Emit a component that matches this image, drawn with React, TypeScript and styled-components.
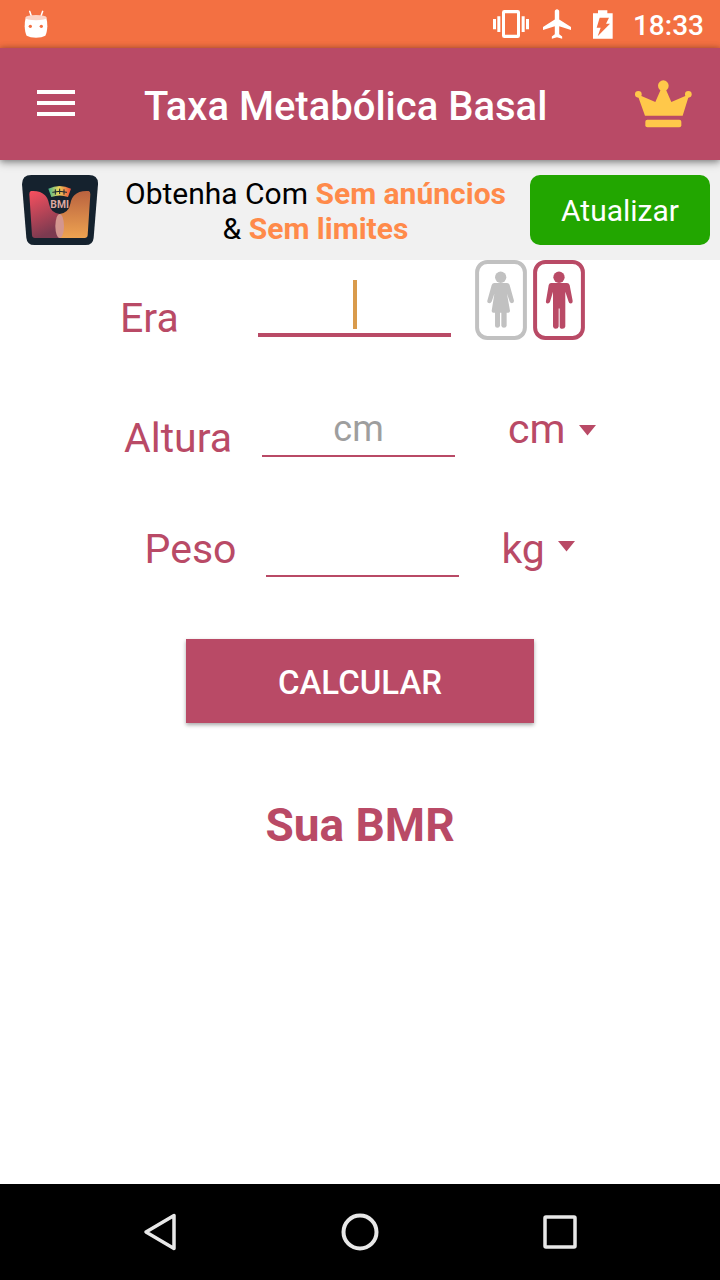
import React, { useState } from "react";
import styled, { createGlobalStyle } from "styled-components";

const rose = "#b94a66";
const orange = "#f37042";

const GlobalStyle = createGlobalStyle`
  *, *::before, *::after { box-sizing: border-box; }
  body {
    margin: 0;
    background: #fff;
    font-family: Roboto, "Noto Sans", sans-serif;
  }
  button, input, select { font-family: inherit; }
`;

const Screen = styled.div`
  display: flex;
  flex-direction: column;
  min-height: 100vh;
`;

const StatusBar = styled.div`
  display: flex;
  align-items: center;
  justify-content: space-between;
  height: 48px;
  padding: 0 16px 0 24px;
  background: ${orange};
`;

const StatusIcons = styled.div`
  display: flex;
  align-items: center;
  gap: 14px;
`;

const BatterySlot = styled.span`
  display: flex;
  padding: 0 6px 0 8px;
`;

const Clock = styled.time`
  color: #fff;
  font-size: 28px;
  font-weight: 500;
  line-height: 32px;
  padding-top: 3px;
`;

const AppBar = styled.header`
  position: relative;
  z-index: 1;
  display: flex;
  align-items: center;
  height: 112px;
  padding: 0 28px 0 36px;
  background: ${rose};
  box-shadow: 0 3px 8px rgba(0, 0, 0, 0.35), 0 0 6px rgba(0, 0, 0, 0.25);
`;

const IconButton = styled.button`
  display: flex;
  padding: 0;
  border: 0;
  background: none;
  cursor: pointer;
`;

const Title = styled.h1`
  flex: 1;
  margin: 0;
  padding: 5px 0 0 68px;
  color: #fff;
  font-size: 40px;
  font-weight: 500;
  line-height: 47px;
`;

const Banner = styled.section`
  display: flex;
  align-items: center;
  height: 100px;
  padding: 0 10px 0 22px;
  background: #f1f1f1;
`;

const Offer = styled.p`
  flex: 1;
  margin: 0;
  padding: 2px 0 0 3px;
  color: #000;
  font-size: 30px;
  line-height: 35px;
  text-align: center;

  strong { color: #ff8a4a; font-weight: 700; }
`;

const UpgradeButton = styled.button`
  width: 180px;
  height: 70px;
  padding: 0;
  border: 0;
  border-radius: 10px;
  background: #22a600;
  color: #fff;
  font-size: 30px;
  cursor: pointer;
`;

const Form = styled.form`
  flex: 1;
  display: flex;
  flex-direction: column;
  align-items: center;
  gap: 40px;
`;

const Row = styled.div`
  display: flex;
  justify-content: center;
  align-items: flex-end;
  gap: 24px;
  height: 80px;
`;

const Label = styled.label<{ $wide?: boolean; $raised?: boolean }>`
  min-width: ${(p) => (p.$wide ? "108px" : "0")};
  margin-right: 6px;
  padding-bottom: ${(p) => (p.$raised ? "9px" : "0")};
  color: ${rose};
  font-size: 41px;
  line-height: 44px;
`;

const Field = styled.div`
  position: relative;
  width: 193px;
  padding-bottom: 3px;
`;

const TextInput = styled.input<{ $active?: boolean }>`
  display: block;
  width: 100%;
  height: 58px;
  padding: 4px 0 0;
  border: 0;
  border-bottom: ${(p) => (p.$active ? "4px" : "2px")} solid ${rose};
  border-radius: 0;
  outline: none;
  background: transparent;
  caret-color: #d99b4c;
  color: ${rose};
  font-size: 36px;
  text-align: center;

  &::placeholder { color: #9e9e9e; opacity: 1; }
`;

const Caret = styled.span`
  position: absolute;
  left: 50%;
  bottom: 11px;
  width: 4px;
  height: 49px;
  margin-left: -2px;
  background: #d99b4c;
  pointer-events: none;
`;

const GenderGroup = styled.div`
  display: flex;
  gap: 6px;
  margin-right: 15px;
`;

const GenderOption = styled.label<{ $on: boolean }>`
  position: relative;
  display: flex;
  color: ${(p) => (p.$on ? rose : "#c1c1c1")};
  cursor: pointer;

  input {
    position: absolute;
    inset: 0;
    width: 100%;
    height: 100%;
    margin: 0;
    opacity: 0;
  }
`;

const UnitBox = styled.div<{ $indent: number; $arrowTop: number }>`
  position: relative;
  display: flex;
  margin: 0 0 7px ${(p) => p.$indent}px;

  svg {
    position: absolute;
    right: 0;
    top: ${(p) => p.$arrowTop}px;
    pointer-events: none;
  }
`;

const UnitSelect = styled.select<{ $width: number }>`
  appearance: none;
  width: ${(p) => p.$width}px;
  height: 48px;
  padding: 0;
  border: 0;
  background: transparent;
  color: ${rose};
  font-size: 41px;
  line-height: 48px;
`;

const Calculate = styled.button`
  width: 348px;
  height: 84px;
  margin-top: 19px;
  padding: 2px 0 0;
  border: 0;
  background: ${rose};
  box-shadow: 0 2px 4px rgba(0, 0, 0, 0.35);
  color: #fff;
  font-size: 33px;
  font-weight: 500;
  cursor: pointer;
`;

const Result = styled.h2`
  margin: 34px 0 40px;
  color: ${rose};
  font-size: 46px;
  font-weight: 700;
  line-height: 56px;
`;

const NavBar = styled.nav`
  display: flex;
  height: 96px;
  padding: 0 60px;
  background: #000;
`;

const NavButton = styled.button`
  flex: 1;
  display: flex;
  align-items: center;
  justify-content: center;
  padding: 0;
  border: 0;
  background: none;
`;

const RobotIcon = () => (
  <svg width="24" height="28" viewBox="72 23 72 84" fill="#fff" aria-hidden="true">
    <path d="M89 27 L94 41 M128 27 L123 41" stroke="#fff" strokeWidth="4.5" strokeLinecap="round" />
    <path d="M77 46 Q74 58 74 72 Q75 92 80 100 Q90 106 108 106 Q126 106 136 100 Q141 92 142 72 Q142 58 139 46 Z" />
    <ellipse cx="108" cy="46" rx="32" ry="8" fill="#fbd3c5" />
    <circle cx="91" cy="72" r="5" fill={orange} />
    <circle cx="124" cy="72" r="5" fill={orange} />
  </svg>
);

const VibrateIcon = () => (
  <svg width="36" height="28" viewBox="39 29 108 84" fill="#fff" aria-hidden="true">
    <path fillRule="evenodd" d="M73 29h40q7 0 7 7v70q0 7-7 7H73q-7 0-7-7V36q0-7 7-7z M75 39v64h36V39z" />
    <path d="M39 56h9v31h-9z M52 48h9v47h-9z M125 48h9v47h-9z M138 56h9v31h-9z" />
  </svg>
);

const PlaneIcon = () => (
  <svg width="28" height="30" viewBox="2 2 19 20" fill="#fff" aria-hidden="true">
    <path d="M21 16v-2l-8-5V3.5c0-.83-.67-1.5-1.5-1.5S10 2.67 10 3.5V9l-8 5v2l8-2.5V19l-2 1.5V22l3.5-1 3.5 1v-1.5L13 19v-5.5l8 2.5z" />
  </svg>
);

const BatteryIcon = () => (
  <svg width="20" height="29" viewBox="342 27 60 87" aria-hidden="true">
    <path d="M342 37h15V28h28v9h16v76h-59z" fill="#fff" />
    <path d="M362 50h28l-9 18h12l-37 38 9-26h-12z" fill={orange} />
  </svg>
);

const MenuIcon = () => (
  <svg width="40" height="28" viewBox="0 0 40 28" fill="#fff" aria-hidden="true">
    <path d="M1 0h38v4H1z M1 11h38v4H1z M1 22h38v4H1z" />
  </svg>
);

const CrownIcon = () => (
  <svg width="57" height="48" viewBox="47 61 171 144" fill="#ffc84a" aria-hidden="true">
    <circle cx="132" cy="78" r="16" />
    <circle cx="57" cy="104" r="10" />
    <circle cx="207" cy="104" r="10" />
    <path d="M54 104 L108 127 L125 88 H139 L156 127 L210 104 L190 168 H77 Z" />
    <rect x="78" y="180" width="108" height="23" rx="6" />
  </svg>
);

const BmiLogo = () => (
  <svg width="76" height="70" viewBox="37 30 228 210" role="img" aria-label="BMI">
    <defs>
      <linearGradient id="left" x1="0" y1="0" x2="0.3" y2="1">
        <stop offset="0" stopColor="#f9505f" />
        <stop offset="1" stopColor="#7c3a50" />
      </linearGradient>
      <linearGradient id="right" x1="0" y1="0" x2="0" y2="1">
        <stop offset="0" stopColor="#b9623f" />
        <stop offset="1" stopColor="#eea351" />
      </linearGradient>
      <linearGradient id="dial" x1="0" y1="0" x2="1" y2="0">
        <stop offset="0" stopColor="#43b58c" />
        <stop offset="0.45" stopColor="#e8d35c" />
        <stop offset="1" stopColor="#ee4b38" />
      </linearGradient>
    </defs>
    <path d="M65 30H238Q266 30 265 58L252 218Q250 240 228 240H74Q52 240 50 218L37 58Q37 30 65 30Z" fill="#15222e" />
    <path d="M64 78Q92 76 106 91Q114 98 118 116Q122 142 150 147V219H76Q68 219 67 211L59 88Q59 79 64 78Z" fill="url(#left)" />
    <path d="M237 78Q208 76 194 91Q186 98 182 116Q178 142 150 147V219H225Q233 219 234 211L242 88Q242 79 237 78Z" fill="url(#right)" />
    <ellipse cx="150" cy="183" rx="13" ry="36" fill="#d3968f" />
    <path d="M116 71Q150 55 184 71L175 96Q150 87 125 96Z" fill="url(#dial)" />
    <path d="M128 82Q150 76 172 82 M137 73V89 M150 71V87 M163 73V89" fill="none" stroke="#15222e" strokeWidth="3" />
    <text x="150" y="130" fill="#dca89f" fontSize="31" fontWeight="700" textAnchor="middle">BMI</text>
  </svg>
);

const Frame = () => (
  <rect x="6" y="6" width="144" height="229" rx="31" fill="#fff" stroke="currentColor" strokeWidth="12" />
);

const WomanIcon = () => (
  <svg width="52" height="80" viewBox="0 0 156 241" fill="currentColor" aria-hidden="true">
    <Frame />
    <circle cx="77" cy="52" r="17" />
    <path d="M58 69H96Q102 69 104 75L117 122Q118 130 111 130Q106 130 104 125L96 102L105 152Q106 159 99 159H95V198Q94 204 87 204Q80 204 79 198V159H75V198Q74 204 67 204Q60 204 60 198V159H55Q49 159 50 152L58 102L50 125Q48 130 43 130Q35 130 37 122L50 75Q52 69 58 69Z" />
  </svg>
);

const ManIcon = () => (
  <svg width="52" height="80" viewBox="0 0 156 241" fill="currentColor" aria-hidden="true">
    <Frame />
    <circle cx="78" cy="52" r="17" />
    <path d="M54 69H102Q108 69 110 75L119 122Q120 131 113 131Q108 131 107 126L97 96V200Q96 207 88 207Q80 207 80 200V146H77V200Q76 207 68 207Q61 207 60 200V96L51 126Q49 131 44 131Q37 131 39 122L47 75Q49 69 54 69Z" />
  </svg>
);

const ArrowIcon = () => (
  <svg width="17" height="11" viewBox="0 0 34 22" fill={rose} aria-hidden="true">
    <path d="M0 0h34L17 21z" />
  </svg>
);

export default function App() {
  const [gender, setGender] = useState("m");
  const [age, setAge] = useState("");

  return (
    <Screen>
      <GlobalStyle />
      <StatusBar>
        <RobotIcon />
        <StatusIcons>
          <VibrateIcon />
          <PlaneIcon />
          <BatterySlot><BatteryIcon /></BatterySlot>
          <Clock>18:33</Clock>
        </StatusIcons>
      </StatusBar>
      <AppBar>
        <IconButton aria-label="Menu"><MenuIcon /></IconButton>
        <Title>Taxa Metabólica Basal</Title>
        <IconButton aria-label="Premium"><CrownIcon /></IconButton>
      </AppBar>
      <Banner>
        <BmiLogo />
        <Offer>
          Obtenha Com <strong>Sem anúncios</strong>
          <br />
          &amp; <strong>Sem limites</strong>
        </Offer>
        <UpgradeButton type="button">Atualizar</UpgradeButton>
      </Banner>
      <Form onSubmit={(e) => e.preventDefault()}>
        <Row>
          <Label htmlFor="age" $wide>Era</Label>
          <Field>
            <TextInput id="age" inputMode="numeric" $active value={age} onChange={(e) => setAge(e.target.value)} />
            {age === "" && <Caret />}
          </Field>
          <GenderGroup role="radiogroup" aria-label="Sexo">
            <GenderOption $on={gender === "f"}>
              <input type="radio" name="gender" aria-label="Feminino" checked={gender === "f"} onChange={() => setGender("f")} />
              <WomanIcon />
            </GenderOption>
            <GenderOption $on={gender === "m"}>
              <input type="radio" name="gender" aria-label="Masculino" checked={gender === "m"} onChange={() => setGender("m")} />
              <ManIcon />
            </GenderOption>
          </GenderGroup>
        </Row>
        <Row>
          <Label htmlFor="height" $wide>Altura</Label>
          <Field>
            <TextInput id="height" inputMode="decimal" placeholder="cm" />
          </Field>
          <UnitBox $indent={29} $arrowTop={20}>
            <UnitSelect $width={88} aria-label="Unidade de altura">
              <option>cm</option>
              <option>ft</option>
            </UnitSelect>
            <ArrowIcon />
          </UnitBox>
        </Row>
        <Row>
          <Label htmlFor="weight" $raised>Peso</Label>
          <Field>
            <TextInput id="weight" inputMode="decimal" />
          </Field>
          <UnitBox $indent={18} $arrowTop={16}>
            <UnitSelect $width={74} aria-label="Unidade de peso">
              <option>kg</option>
              <option>lb</option>
            </UnitSelect>
            <ArrowIcon />
          </UnitBox>
        </Row>
        <Calculate type="submit">CALCULAR</Calculate>
        <Result>Sua BMR</Result>
      </Form>
      <NavBar aria-label="Sistema">
        <NavButton aria-label="Voltar">
          <svg width="34" height="38" viewBox="0 0 34 38" fill="none" stroke="#e8e8e8" strokeWidth="3.5" strokeLinejoin="round" aria-hidden="true">
            <path d="M31 2.5V35.5L3 19z" />
          </svg>
        </NavButton>
        <NavButton aria-label="Início">
          <svg width="38" height="38" viewBox="0 0 38 38" fill="none" stroke="#e8e8e8" strokeWidth="4" aria-hidden="true">
            <circle cx="19" cy="19" r="16.5" />
          </svg>
        </NavButton>
        <NavButton aria-label="Recentes">
          <svg width="34" height="34" viewBox="0 0 34 34" fill="none" stroke="#e8e8e8" strokeWidth="3.5" aria-hidden="true">
            <rect x="2" y="2" width="30" height="30" rx="1" />
          </svg>
        </NavButton>
      </NavBar>
    </Screen>
  );
}
